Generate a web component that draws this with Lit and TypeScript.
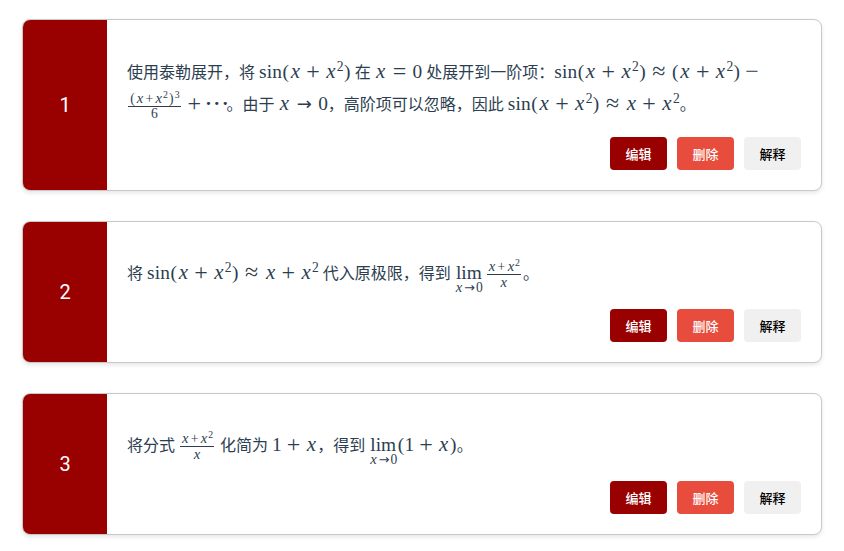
import { LitElement, html, css, TemplateResult } from "lit";
import { customElement } from "lit/decorators.js";

const x = html`<span class="x">x</span>`;
const plus = html`<span class="bin">+</span>`;
const sq = html`<sup class="sup">2</sup>`;
const xpx2 = html`${x}${plus}${x}${sq}`;
const sinTerm = html`<span class="fn sin">sin</span><span class="p">(</span>${xpx2}<span class="p">)</span>`;
const rel = (s: string) => html`<span class="rel">${s}</span>`;
const m = (t: TemplateResult) => html`<span class="m">${t}</span>`;
const frac = (a: TemplateResult, b: TemplateResult) =>
  html`<span class="frac"><span class="num">${a}</span><span class="den">${b}</span></span>`;
const tiny = html`<span class="x">x</span><span class="tbin">+</span><span class="x">x</span><sup class="tsup">2</sup>`;
const lim = html`<span class="lim"><span class="fn">lim</span><span class="under"><span class="x">x</span><span class="arrow">→</span>0</span></span>`;

const STEPS: { n: number; cls: string; body: TemplateResult }[] = [
  {
    n: 1,
    cls: "s1",
    body: html`使用泰勒展开，将 ${m(sinTerm)} 在 ${m(html`${x}${rel("=")}0`)} 处展开到一阶项：${m(
      html`${sinTerm}${rel("≈")}<span class="p">(</span>${xpx2}<span class="p">)</span><span class="bin">−</span>`
    )}<br />${m(
      html`${frac(
        html`<span class="tp">(</span>${tiny}<span class="tp">)</span><sup class="tsup">3</sup>`,
        html`6`
      )}${plus}<span class="dots">···</span>`
    )}。由于 ${m(html`${x}<span class="rel rarr">→</span>0`)}，高阶项可以忽略，因此 ${m(
      html`${sinTerm}${rel("≈")}${xpx2}`
    )}。`,
  },
  {
    n: 2,
    cls: "s2",
    body: html`将 ${m(html`${sinTerm}${rel("≈")}${xpx2}`)} 代入原极限，得到 ${m(
      html`${lim}<span class="thin"></span>${frac(tiny, html`<span class="x">x</span>`)}`
    )}。`,
  },
  {
    n: 3,
    cls: "s3",
    body: html`将分式 ${m(frac(tiny, html`<span class="x">x</span>`))} 化简为 ${m(
      html`1${plus}${x}`
    )}，得到 ${m(html`${lim}<span class="p">(</span>1${plus}${x}<span class="p">)</span>`)}。`,
  },
];

@customElement("app-root")
export class AppRoot extends LitElement {
  static styles = css`
    :host {
      display: block;
      box-sizing: border-box;
      width: 844px;
      height: 551px;
      padding: 19px 22px 0;
      background: #fff;
      overflow: hidden;
      font-family: Roboto, "Noto Sans CJK SC", sans-serif;
      color: #2c3e50;
    }
    .card {
      display: flex;
      width: 800px;
      box-sizing: border-box;
      border: 1px solid #c8c8c8;
      border-radius: 8px;
      overflow: hidden;
      margin-bottom: 30px;
      background: #fff;
      box-shadow: 0 2px 4px rgba(0, 0, 0, 0.1);
    }
    .badge {
      flex: none;
      width: 84px;
      display: flex;
      align-items: center;
      justify-content: center;
      background: #990000;
      color: #fff;
      font-size: 20px;
    }
    .content {
      flex: 1;
      min-width: 0;
      padding: 20px;
      display: flex;
      flex-direction: column;
    }
    .text {
      font-size: 16px;
      line-height: 25.6px;
      white-space: nowrap;
    }
    .s1 .text {
      padding-top: 17px;
      height: 80px;
      line-height: 32px;
    }
    .s2 .text,
    .s3 .text {
      padding-top: 17px;
      height: 50px;
    }
    .btns {
      display: flex;
      justify-content: flex-end;
      gap: 10px;
    }
    .btn {
      width: 57px;
      height: 33px;
      border: none;
      border-radius: 4px;
      padding: 0;
      font-family: inherit;
      font-size: 13px;
      font-weight: 500;
    }
    .edit { background: #990000; color: #fff; }
    .del { background: #e74c3c; color: #fff; }
    .exp { background: #f0f0f0; color: #000; }

    .m {
      font-family: "Liberation Serif", serif;
      font-size: 19.36px;
      white-space: nowrap;
      line-height: 1;
    }
    .x {
      display: inline-block;
      width: 0.572em;
      text-align: center;
      font-style: italic;
      font-size: 1.08em;
      line-height: 1;
    }
    .p { display: inline-block; width: 0.37em; text-align: center; }
    .fn { display: inline-block; }
    .sin { width: 1.2em; letter-spacing: 0.01em; }
    .bin, .rel {
      display: inline-block;
      width: 15px;
      text-align: center;
      font-size: 24px;
      line-height: 0;
      vertical-align: -1px;
      white-space: nowrap;
    }
    .bin { margin: 0 4.3px; }
    .rel { margin: 0 5.4px; }
    .rarr {
      font-family: "DejaVu Sans", sans-serif;
      font-size: 18px;
      margin: 0 6.4px;
      vertical-align: 0;
    }
    .sup, .tsup {
      font-size: 0.7em;
      line-height: 0;
      vertical-align: 0.55em;
    }
    .frac {
      display: inline-flex;
      flex-direction: column;
      align-items: center;
      vertical-align: middle;
      font-size: 13.55px;
      line-height: 1;
      margin: 0 2px 0 1px;
    }
    .num {
      padding: 0 1px;
      line-height: 14px;
    }
    .den {
      align-self: stretch;
      text-align: center;
      border-top: 1px solid #2c3e50;
      line-height: 14px;
    }
    .tbin { display: inline-block; width: 0.778em; text-align: center; }
    .tp { display: inline-block; width: 0.5em; text-align: center; }
    .tsup { font-size: 0.72em; }
    .dots {
      display: inline-block;
      width: 1.1em;
      margin-left: -1px;
      letter-spacing: 0.1em;
      font-weight: 700;
    }
    .lim {
      display: inline-flex;
      flex-direction: column;
      align-items: center;
      vertical-align: baseline;
      line-height: 1;
    }
    .under {
      font-size: 13.55px;
      line-height: 14px;
      margin-top: -2px;
      white-space: nowrap;
    }
    .arrow {
      display: inline-block;
      width: 1em;
      text-align: center;
      font-family: "DejaVu Sans", sans-serif;
      font-size: 0.95em;
      line-height: 0;
    }
    .thin { display: inline-block; width: 3px; }
  `;

  render() {
    return STEPS.map(
      (s) => html`<div class="card ${s.cls}">
        <div class="badge">${s.n}</div>
        <div class="content">
          <div class="text">${s.body}</div>
          <div class="btns">
            <button class="btn edit">编辑</button>
            <button class="btn del">删除</button>
            <button class="btn exp">解释</button>
          </div>
        </div>
      </div>`
    );
  }
}
